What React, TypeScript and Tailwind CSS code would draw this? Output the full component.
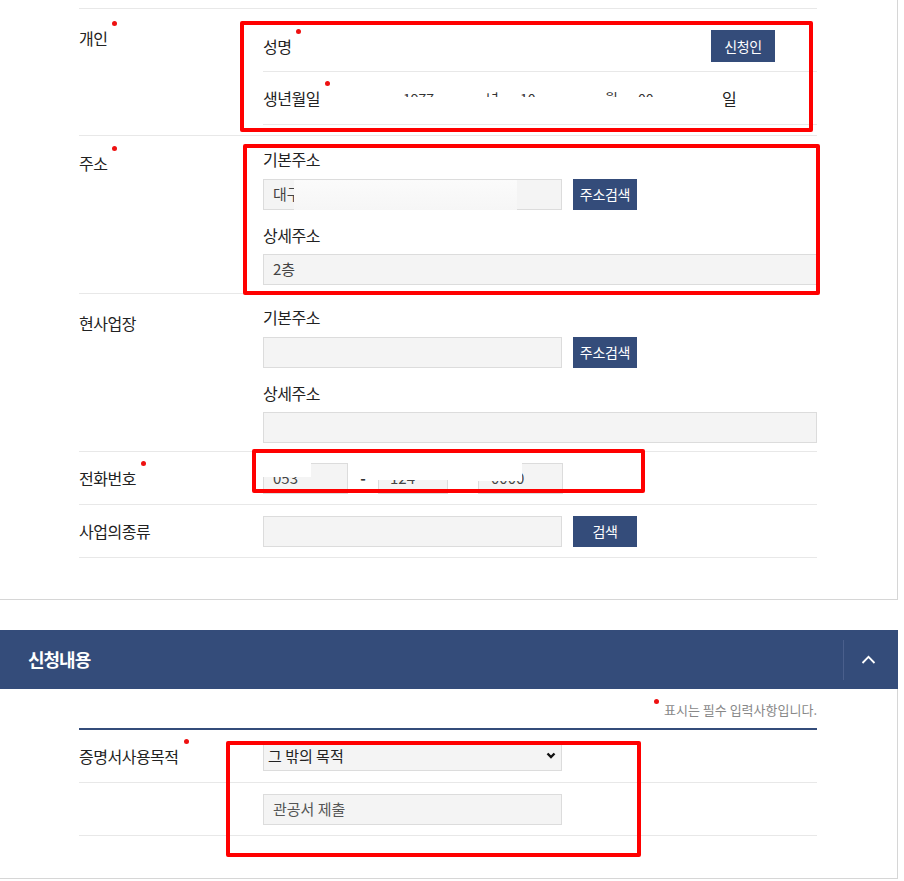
import React from "react";

const line = "border-[#e8e8e8]";

function Label({ children, req = false }: { children: React.ReactNode; req?: boolean }) {
    return (
        <span className="relative inline-block text-[16px] leading-[22px] tracking-[-0.5px] text-[#222]">
            {children}
            {req && (
                <span className="absolute left-[calc(100%+5px)] -top-[6px] w-[5px] h-[5px] rounded-full bg-[#ee1111]" />
            )}
        </span>
    );
}

function Field({ value = "", className = "" }: { value?: string; className?: string }) {
    return (
        <div
            className={`h-[31px] bg-[#f4f4f4] border border-[#dcdcdc] pl-[9px] flex items-center text-[15px] text-[#444] ${className}`}
        >
            {value}
        </div>
    );
}

function NavyButton({ children, className = "" }: { children: React.ReactNode; className?: string }) {
    return (
        <button className={`h-[31px] w-[64px] bg-[#344c7a] text-white text-[14px] tracking-[-0.3px] ${className}`}>
            {children}
        </button>
    );
}

function AddressBlock({ base = "", detail = "" }: { base?: string; detail?: string }) {
    return (
        <div className="pt-[11px]">
            <Label>기본주소</Label>
            <div className="flex gap-[11px] mt-[8px]">
                <Field value={base} className="w-[299px]" />
                <NavyButton>주소검색</NavyButton>
            </div>
            <div className="mt-[13px]">
                <Label>상세주소</Label>
            </div>
            <Field value={detail} className="mt-[7px] w-[554px]" />
        </div>
    );
}

export default function App() {
    return (
        <div className="relative w-[904px] min-h-[881px] bg-white overflow-hidden font-['Noto_Sans_CJK_KR','Noto_Sans',sans-serif]">
            {/* 신청인 정보 */}
            <section className="w-[898px] h-[600px] border-r border-b border-[#d6d6d6] pt-[8px] pl-[79px]">
                <div className={`w-[738px] border-t ${line}`}>
                    {/* 개인 */}
                    <div className={`flex h-[127px] border-b ${line}`}>
                        <div className="w-[184px] pt-[17px]">
                            <Label req>개인</Label>
                        </div>
                        <div className="flex-1">
                            <div className={`flex items-center justify-between h-[63px] pt-[12px] border-b ${line}`}>
                                <Label req>성명</Label>
                                <NavyButton className="mr-[42px] h-[32px]">신청인</NavyButton>
                            </div>
                            <div className={`flex items-center h-[53px] border-b ${line} text-[14px] text-[#333]`}>
                                <span className="w-[140px]">
                                    <Label req>생년월일</Label>
                                </span>
                                <span className="w-[83px]">1977</span>
                                <span className="w-[34px]">년</span>
                                <span className="w-[85px]">10</span>
                                <span className="w-[33px]">월</span>
                                <span className="w-[84px]">00</span>
                                <span className="text-[16px] text-[#222]">일</span>
                            </div>
                        </div>
                    </div>

                    {/* 주소 */}
                    <div className={`flex h-[158px] border-b ${line}`}>
                        <div className="w-[184px] pt-[15px]">
                            <Label req>주소</Label>
                        </div>
                        <AddressBlock base="대구" detail="2층" />
                    </div>

                    {/* 현사업장 */}
                    <div className={`flex h-[158px] border-b ${line}`}>
                        <div className="w-[184px] pt-[17px]">
                            <Label>현사업장</Label>
                        </div>
                        <AddressBlock />
                    </div>

                    {/* 전화번호 */}
                    <div className={`flex items-center h-[53px] border-b ${line}`}>
                        <div className="w-[184px]">
                            <Label req>전화번호</Label>
                        </div>
                        <div className="flex items-center">
                            <Field value="053" className="w-[85px]" />
                            <span className="w-[30px] text-center text-[15px] font-bold text-[#333]">-</span>
                            <Field value="124" className="w-[70px] pl-[11px]" />
                            <span className="w-[30px]" />
                            <Field value="0000" className="w-[85px] pl-[12px]" />
                        </div>
                    </div>

                    {/* 사업의종류 */}
                    <div className={`flex items-center h-[53px] border-b ${line}`}>
                        <div className="w-[184px]">
                            <Label>사업의종류</Label>
                        </div>
                        <div className="flex gap-[11px]">
                            <Field className="w-[299px]" />
                            <NavyButton>검색</NavyButton>
                        </div>
                    </div>
                </div>
            </section>

            {/* 신청내용 헤더 */}
            <div className="mt-[30px] w-[898px] h-[59px] bg-[#344c7a] flex items-center">
                <h2 className="flex-1 pl-[28px] text-white text-[18px] font-bold tracking-[-1px]">신청내용</h2>
                <div className="w-[1px] h-[40px] bg-[#4a5f8c]" />
                <div className="w-[54px] flex justify-center pr-[6px]">
                    <svg width="15" height="9" viewBox="0 0 15 9" fill="none">
                        <polyline points="1.5,8 7.5,1.8 13.5,8" stroke="white" strokeWidth="1.8" />
                    </svg>
                </div>
            </div>

            {/* 신청내용 본문 */}
            <section className="w-[898px] h-[190px] border-r border-b border-[#d6d6d6] pl-[79px]">
                <div className="w-[738px]">
                    <div className="h-[41px] flex justify-end pt-[12px] border-b-2 border-[#344c7a]">
                        <span className="relative text-[13px] leading-[18px] tracking-[0px] text-[#888]">
                            <span className="absolute -left-[10px] -top-[2px] w-[5px] h-[5px] rounded-full bg-[#ee1111]" />
                            표시는 필수 입력사항입니다.
                        </span>
                    </div>
                    <div className={`flex items-center h-[53px] border-b ${line}`}>
                        <div className="w-[184px]">
                            <Label req>증명서사용목적</Label>
                        </div>
                        <div className="relative w-[299px]">
                            <select
                                defaultValue="etc"
                                className="appearance-none w-full h-[30px] bg-[#f4f4f4] border border-[#dcdcdc] pl-[4px] text-[15px] text-[#222] outline-none"
                            >
                                <option value="etc">그 밖의 목적</option>
                            </select>
                            <svg
                                className="absolute right-[6px] top-[11px] pointer-events-none"
                                width="10"
                                height="7"
                                viewBox="0 0 10 7"
                                fill="none"
                            >
                                <polyline points="1.5,1.5 5,5 8.5,1.5" stroke="#111" strokeWidth="2.4" />
                            </svg>
                        </div>
                    </div>
                    <div className={`flex items-center h-[53px] border-b ${line}`}>
                        <div className="w-[184px]" />
                        <Field value="관공서 제출" className="w-[299px] text-[#555]" />
                    </div>
                </div>
            </section>

            {/* 가림 처리 */}
            <div className="absolute left-[395px] top-[97px] w-[305px] h-[16px] bg-white" />
            <div className="absolute left-[294px] top-[180px] w-[223px] h-[30px] bg-gradient-to-b from-[#fbfbfb] to-[#f6f6f6]" />
            <div className="absolute left-[260px] top-[460px] w-[51px] h-[17px] bg-white" />
            <div className="absolute left-[375px] top-[461px] w-[88px] h-[19px] bg-white" />
            <div className="absolute left-[463px] top-[461px] w-[59px] h-[20px] bg-white" />

            {/* 빨간 표시 */}
            <div className="absolute left-[240px] top-[21px] w-[573px] h-[111px] border-4 border-[#ff0000] rounded-[2px]" />
            <div className="absolute left-[243px] top-[144px] w-[577px] h-[151px] border-4 border-[#ff0000] rounded-[2px]" />
            <div className="absolute left-[252px] top-[449px] w-[393px] h-[44px] border-4 border-[#ff0000] rounded-[2px]" />
            <div className="absolute left-[226px] top-[741px] w-[415px] h-[116px] border-4 border-[#ff0000] rounded-[2px]" />
        </div>
    );
}
